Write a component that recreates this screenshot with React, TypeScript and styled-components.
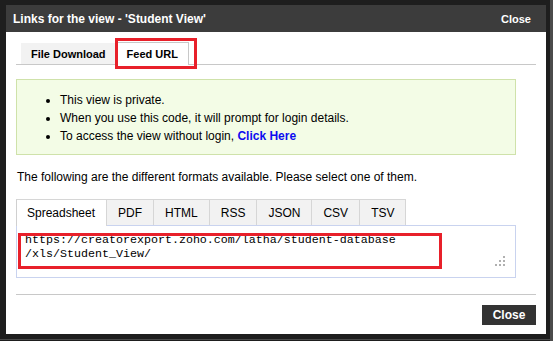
import React from "react";
import styled, { createGlobalStyle } from "styled-components";

const Global = createGlobalStyle`
  html, body { margin: 0; padding: 0; }
  body {
    width: 553px;
    height: 341px;
    overflow: hidden;
    background:
      linear-gradient(to bottom, transparent 339px, #4a4a4a 339px, #4a4a4a 340px, transparent 340px),
      linear-gradient(to right, #1e1e1e 550px, #4b4b4b 550px);
    font-family: "Liberation Sans", Arial, sans-serif;
  }
`;

const Page = styled.div`
  padding: 5px 0 0 6px;
`;

const Dialog = styled.div`
  width: 540px;
  height: 329px;
  background: #ffffff;
  display: flex;
  flex-direction: column;
`;

const TitleBar = styled.div`
  height: 27px;
  flex: none;
  background: #3c3c3c;
  display: flex;
  align-items: center;
  justify-content: space-between;
  padding: 0 15px 0 7px;
  color: #ffffff;
  font-weight: bold;
`;

const Title = styled.span`
  font-size: 12px;
  padding-top: 1px;
`;

const TitleClose = styled.span`
  font-size: 11px;
  padding-top: 1px;
`;

const Body = styled.div`
  flex: 1;
  padding: 10px 10px 0 10px;
  display: flex;
  flex-direction: column;
`;

const MainTabs = styled.div`
  display: flex;
  align-items: flex-end;
  height: 22px;
  border-bottom: 1px solid #c8c8c8;
  padding-left: 5px;
`;

const MainTab = styled.div<{ $active?: boolean }>`
  position: relative;
  display: flex;
  align-items: center;
  font-size: 11px;
  font-weight: bold;
  color: #000;
  box-sizing: border-box;
  ${(p) =>
    p.$active
      ? `
    height: 23px;
    margin-bottom: -1px;
    margin-left: 2px;
    padding: 0 10px 1px 9px;
    background: #fff;
    border: 1px solid #c8c8c8;
    border-bottom: none;
  `
      : `
    height: 21px;
    padding: 0 9px 0 10px;
    background: #f2f2f2;
  `}
`;

const Highlight = styled.span<{ $l: number; $t: number; $w: number; $h: number }>`
  position: absolute;
  left: ${(p) => p.$l}px;
  top: ${(p) => p.$t}px;
  width: ${(p) => p.$w}px;
  height: ${(p) => p.$h}px;
  box-sizing: border-box;
  border: 3px solid #e8202a;
  pointer-events: none;
`;

const InfoBox = styled.div`
  width: 500px;
  box-sizing: border-box;
  margin-top: 14px;
  background: #f3fce6;
  border: 1px solid #cfe2aa;
`;

const InfoList = styled.ul`
  margin: 11px 0 9px;
  padding-left: 43px;
  font-size: 12px;
  line-height: 18px;
  color: #000;
`;

const Link = styled.a`
  color: #0c0cf0;
  font-weight: bold;
  text-decoration: none;
`;

const Intro = styled.p`
  margin: 14px 0 14px 1px;
  font-size: 12px;
  line-height: 16px;
  color: #000;
`;

const FormatTabs = styled.div`
  display: flex;
  height: 26px;
`;

const FormatTab = styled.div<{ $active?: boolean }>`
  position: relative;
  z-index: 1;
  box-sizing: border-box;
  display: flex;
  align-items: center;
  padding: 0 11px;
  font-size: 12px;
  color: #000;
  border-top: 1px solid #d6d6d6;
  border-right: 1px solid #d6d6d6;
  background: ${(p) => (p.$active ? "#ffffff" : "#f2f2f2")};
  height: ${(p) => (p.$active ? "27px" : "26px")};
  ${(p) => (p.$active ? "border-left: 1px solid #d0d0d0; padding-left: 10px;" : "")}
`;

const Editor = styled.div`
  position: relative;
  width: 500px;
  height: 53px;
  box-sizing: border-box;
  border: 1px solid #c9d3ef;
  padding: 7px 8px 0;
  font-family: "Liberation Mono", "Courier New", monospace;
  font-size: 11.67px;
  line-height: 14.3px;
  color: #000;
`;

const Grip = styled.svg`
  position: absolute;
  right: 10px;
  bottom: 11px;
`;

const Separator = styled.div`
  margin-top: 16px;
  height: 1px;
  background: #c8c8c8;
`;

const Footer = styled.div`
  display: flex;
  justify-content: flex-end;
  margin-top: 10px;
`;

const CloseButton = styled.button`
  width: 54px;
  height: 20px;
  border: none;
  padding: 0;
  background: #333333;
  color: #ffffff;
  font-family: "Liberation Sans", Arial, sans-serif;
  font-size: 12px;
  font-weight: bold;
`;

const formats = ["Spreadsheet", "PDF", "HTML", "RSS", "JSON", "CSV", "TSV"];

export default function App() {
  return (
    <>
      <Global />
      <Page>
        <Dialog>
          <TitleBar>
            <Title>Links for the view - 'Student View'</Title>
            <TitleClose>Close</TitleClose>
          </TitleBar>
          <Body>
            <MainTabs>
              <MainTab>File Download</MainTab>
              <MainTab $active>
                Feed URL
                <Highlight $l={-3} $t={-5} $w={82} $h={31} />
              </MainTab>
            </MainTabs>
            <InfoBox>
              <InfoList>
                <li>This view is private.</li>
                <li>When you use this code, it will prompt for login details.</li>
                <li>
                  To access the view without login, <Link href="#">Click Here</Link>
                </li>
              </InfoList>
            </InfoBox>
            <Intro>
              The following are the different formats available. Please select one of them.
            </Intro>
            <FormatTabs>
              {formats.map((f, i) => (
                <FormatTab key={f} $active={i === 0}>
                  {f}
                </FormatTab>
              ))}
            </FormatTabs>
            <Editor>
              https://creatorexport.zoho.com/latha/student-database
              <br />
              /xls/Student_View/
              <Highlight $l={1} $t={7} $w={424} $h={36} />
              <Grip width="10" height="10" viewBox="0 0 10 10">
                <rect x="8" y="0" width="2" height="2" fill="#b0b0b0" />
                <rect x="4" y="4" width="2" height="2" fill="#b0b0b0" />
                <rect x="8" y="4" width="2" height="2" fill="#b0b0b0" />
                <rect x="0" y="8" width="2" height="2" fill="#b0b0b0" />
                <rect x="4" y="8" width="2" height="2" fill="#b0b0b0" />
                <rect x="8" y="8" width="2" height="2" fill="#b0b0b0" />
              </Grip>
            </Editor>
            <Separator />
            <Footer>
              <CloseButton>Close</CloseButton>
            </Footer>
          </Body>
        </Dialog>
      </Page>
    </>
  );
}
